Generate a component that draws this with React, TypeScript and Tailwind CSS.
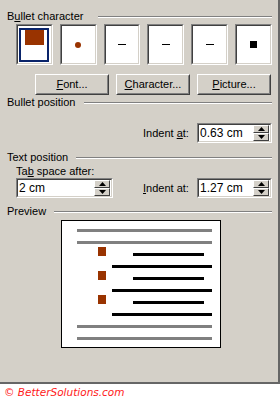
import React from 'react'

// Bullets and Numbering dialog fragment (Windows classic look)

function Etched({ className = '' }: { className?: string }) {
  return <div className={`h-[2px] border-t border-t-[#808080] border-b border-b-white ${className}`} />
}

function GroupHeader({ children, gap = 'ml-[8px]' }: { children: React.ReactNode; gap?: string }) {
  return (
    <div className="flex items-center h-[13px] leading-[13px]">
      <span className="whitespace-nowrap">{children}</span>
      <Etched className={`flex-1 ${gap}`} />
    </div>
  )
}

function Sunken({ className = '', children }: { className?: string; children?: React.ReactNode }) {
  return (
    <div className={`border border-t-[#808080] border-l-[#808080] border-b-white border-r-white ${className}`}>
      <div className="w-full h-full border border-t-[#404040] border-l-[#404040] border-b-[#d4d0c8] border-r-[#d4d0c8] bg-white">
        {children}
      </div>
    </div>
  )
}

function Button({ children }: { children: React.ReactNode }) {
  return (
    <div className="w-[74px] h-[21px] border border-t-white border-l-white border-b-[#404040] border-r-[#404040]">
      <div className="w-full h-full border border-t-[#d4d0c8] border-l-[#d4d0c8] border-b-[#808080] border-r-[#808080] flex items-center justify-center">
        {children}
      </div>
    </div>
  )
}

function SpinHalf({ up }: { up: boolean }) {
  return (
    <div className="w-[16px] h-[8px] bg-[#d4d0c8] border border-t-white border-l-white border-b-[#404040] border-r-[#404040] flex items-center justify-center">
      <svg width="7" height="4" viewBox="0 0 7 4">
        {up ? <polygon points="3.5,0 7,4 0,4" fill="#000" /> : <polygon points="0,0 7,0 3.5,4" fill="#000" />}
      </svg>
    </div>
  )
}

function SpinInput({ value, width }: { value: string; width: string }) {
  return (
    <Sunken className={`${width} h-[20px]`}>
      <div className="flex items-center h-full">
        <span className="flex-1 pl-[1px] text-[12px] leading-[14px]">{value}</span>
        <div className="flex flex-col mr-[1px]">
          <SpinHalf up />
          <SpinHalf up={false} />
        </div>
      </div>
    </Sunken>
  )
}

function BulletBox({ children }: { children?: React.ReactNode }) {
  return (
    <Sunken className="w-[37px] h-[41px]">
      <div className="w-full h-full flex items-center justify-center">{children}</div>
    </Sunken>
  )
}

function PreviewLine({ left, width, gray, mt }: { left: string; width: string; gray?: boolean; mt: string }) {
  return <div className={`h-[3px] ${left} ${width} ${mt} ${gray ? 'bg-[#808080]' : 'bg-black'}`} />
}

function BulletRow() {
  return (
    <div className="flex items-end h-[9px] mt-[3px]">
      <div className="ml-[36px] w-[8px] h-[9px] bg-[#993300]" />
      <div className="ml-[27px] w-[71px] h-[3px] bg-black" />
    </div>
  )
}

export default function App() {
  return (
    <div className="w-[280px] h-[399px] bg-white font-['Liberation_Sans',sans-serif] text-[11px] text-black">
      <div className="h-[384px] bg-[#d4d0c8] border-r-2 border-b-2 border-[#666666] flex flex-col pl-[7px] pr-[6px] pt-[10px]">
        <GroupHeader gap="ml-[15px]">
          B<span className="underline">u</span>llet character
        </GroupHeader>

        {/* bullet choices */}
        <div className="flex gap-[7px] ml-[9px] mt-[1px]">
          <BulletBox>
            <div className="w-[30px] h-[34px] border-2 border-[#0a246a] flex justify-center">
              <div className="w-[19px] h-[15px] bg-[#993300]" />
            </div>
          </BulletBox>
          <BulletBox>
            <div className="w-[6px] h-[6px] rounded-full bg-[#993300]" />
          </BulletBox>
          <BulletBox>
            <div className="w-[8px] h-[1px] bg-black" />
          </BulletBox>
          <BulletBox>
            <div className="w-[8px] h-[1px] bg-black" />
          </BulletBox>
          <BulletBox>
            <div className="w-[8px] h-[1px] bg-black" />
          </BulletBox>
          <BulletBox>
            <div className="w-[7px] h-[7px] bg-black" />
          </BulletBox>
        </div>

        <div className="flex gap-[7px] ml-[28px] mt-[9px]">
          <Button>
            <span className="underline">F</span>ont...
          </Button>
          <Button>
            <span className="underline">C</span>haracter...
          </Button>
          <Button>
            <span className="underline">P</span>icture...
          </Button>
        </div>

        <div className="mt-[1px]">
          <GroupHeader>Bullet position</GroupHeader>
        </div>

        <div className="flex items-center ml-[136px] mt-[14px]">
          <span className="w-[54px] whitespace-nowrap">
            Indent <span className="underline">a</span>t:
          </span>
          <SpinInput value="0.63 cm" width="w-[75px]" />
        </div>

        <div className="mt-[8px]">
          <GroupHeader>Text position</GroupHeader>
        </div>

        <div className="flex items-end mt-[1px]">
          <div className="flex flex-col ml-[9px]">
            <span className="h-[13px] leading-[13px]">
              Ta<span className="underline">b</span> space after:
            </span>
            <SpinInput value="2 cm" width="w-[97px]" />
          </div>
          <div className="flex items-center ml-[30px]">
            <span className="w-[54px] whitespace-nowrap">
              <span className="underline">I</span>ndent at:
            </span>
            <SpinInput value="1.27 cm" width="w-[75px]" />
          </div>
        </div>

        <div className="mt-[7px]">
          <GroupHeader>Preview</GroupHeader>
        </div>

        {/* preview */}
        <div className="ml-[54px] mt-[2px] w-[160px] h-[128px] border border-black bg-white flex flex-col pt-[8px]">
          <PreviewLine left="ml-[15px]" width="w-[135px]" gray mt="mt-0" />
          <PreviewLine left="ml-[15px]" width="w-[135px]" gray mt="mt-[9px]" />
          <BulletRow />
          <PreviewLine left="ml-[50px]" width="w-[100px]" mt="mt-[9px]" />
          <BulletRow />
          <PreviewLine left="ml-[50px]" width="w-[100px]" mt="mt-[9px]" />
          <BulletRow />
          <PreviewLine left="ml-[50px]" width="w-[100px]" mt="mt-[9px]" />
          <PreviewLine left="ml-[15px]" width="w-[135px]" gray mt="mt-[9px]" />
          <PreviewLine left="ml-[15px]" width="w-[135px]" gray mt="mt-[9px]" />
        </div>
      </div>

      <div className="pl-[4px] pt-[1px] font-['DejaVu_Sans',sans-serif] italic text-[10.5px] leading-[14px] text-[#ff1a1a]">
        © BetterSolutions.com
      </div>
    </div>
  )
}
